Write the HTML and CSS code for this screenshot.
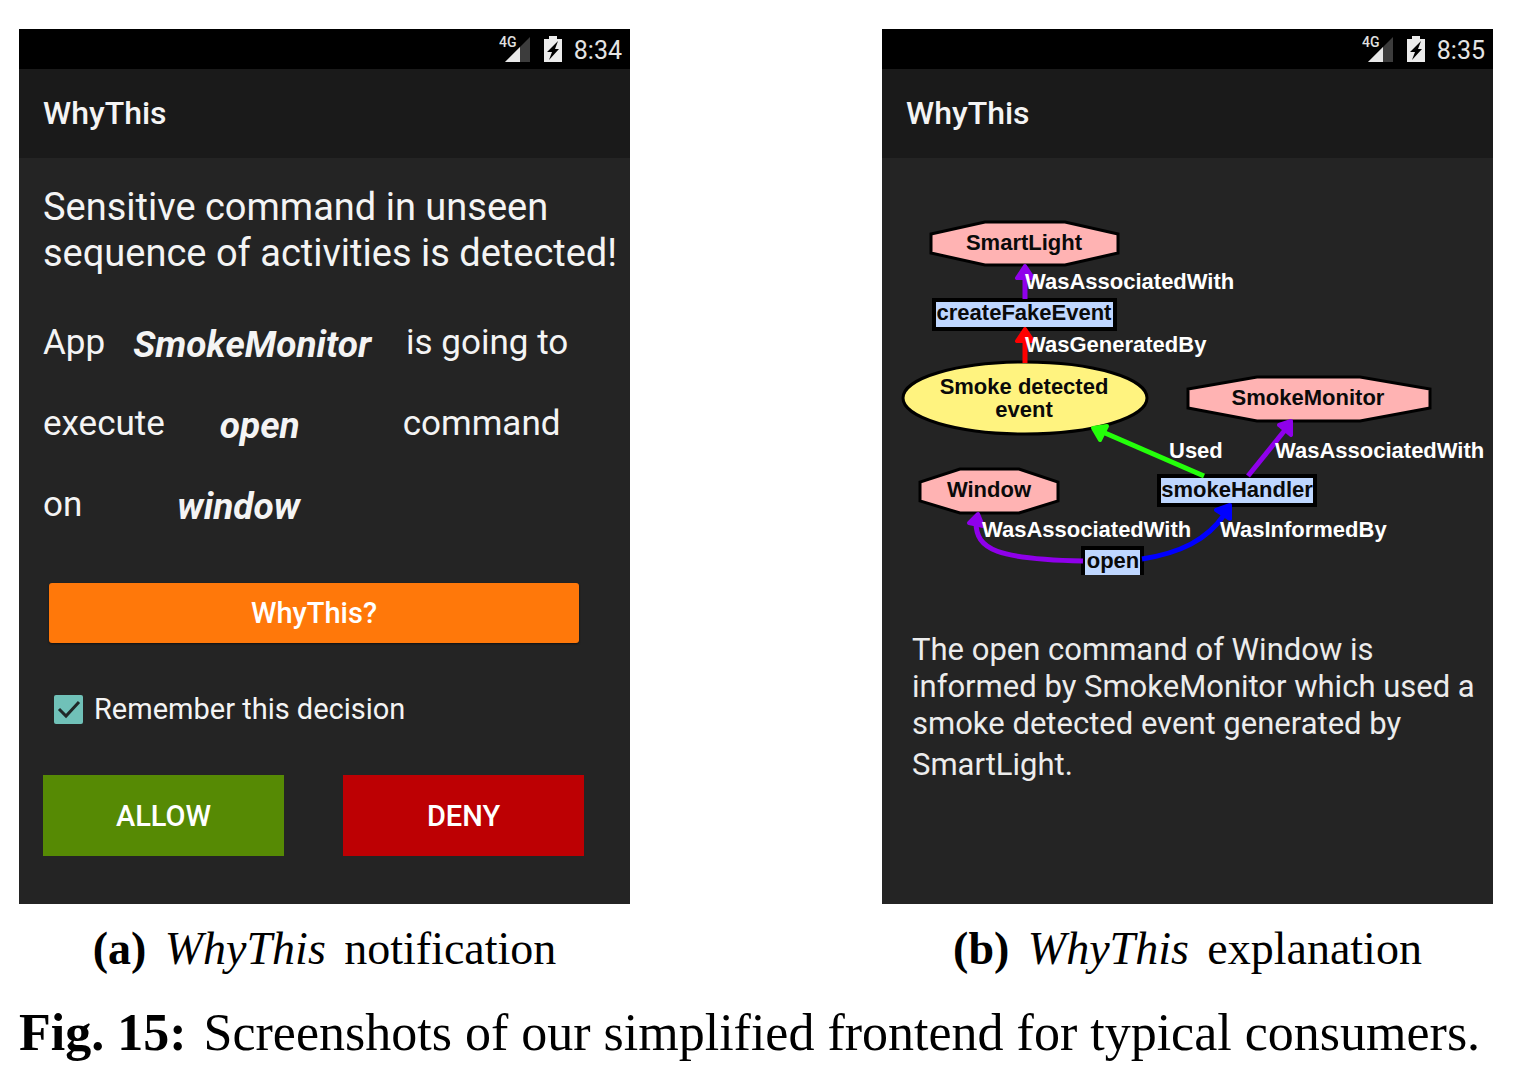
FILE: index.html
```html
<!DOCTYPE html>
<html lang="en">
<head>
<meta charset="utf-8">
<meta name="viewport" content="width=device-width, initial-scale=1">
<title>WhyThis frontend</title>
<link rel="stylesheet" href="styles.css">
</head>
<body>
<main class="figure">
  <div class="panels">
    <figure class="panel">
      <section class="phone">
        <div class="status">
          <svg class="signal" viewBox="0 0 32 28" aria-hidden="true">
            <text x="0" y="12" class="net">4G</text>
            <path d="M31 2V27H6Z" fill="#3c3c3c"/><path d="M21 12V27H6Z" fill="#e8e8e8"/>
          </svg>
          <svg class="battery" viewBox="0 0 18 26" aria-hidden="true">
            <path d="M5 0h8v3h5v23H0V3h5z" fill="#ececec"/><path d="M14 5L3 16h5l-3 8L15 13h-4z" fill="#000"/>
          </svg>
          <time>8:34</time>
        </div>
        <header class="appbar"><h1>WhyThis</h1></header>
        <form class="screen notice">
          <h2>Sensitive command in unseen<br>sequence of activities is detected!</h2>
          <p class="row row-app"><span>App</span><em>SmokeMonitor</em><span>is going to</span></p>
          <p class="row row-command"><span>execute</span><em>open</em><span>command</span></p>
          <p class="row row-device"><span>on</span><em>window</em></p>
          <button type="button" class="why">WhyThis?</button>
          <div class="remember">
            <input type="checkbox" id="remember" checked>
            <label for="remember">Remember this decision</label>
          </div>
          <div class="actions">
            <button type="button" class="allow">ALLOW</button>
            <button type="button" class="deny">DENY</button>
          </div>
        </form>
      </section>
      <figcaption><b>(a)</b> <i>WhyThis</i> notification</figcaption>
    </figure>
    <figure class="panel">
      <section class="phone">
        <div class="status">
          <svg class="signal" viewBox="0 0 32 28" aria-hidden="true">
            <text x="0" y="12" class="net">4G</text>
            <path d="M31 2V27H6Z" fill="#3c3c3c"/><path d="M21 12V27H6Z" fill="#e8e8e8"/>
          </svg>
          <svg class="battery" viewBox="0 0 18 26" aria-hidden="true">
            <path d="M5 0h8v3h5v23H0V3h5z" fill="#ececec"/><path d="M14 5L3 16h5l-3 8L15 13h-4z" fill="#000"/>
          </svg>
          <time>8:35</time>
        </div>
        <header class="appbar"><h1>WhyThis</h1></header>
        <div class="screen">
          <svg class="graph" viewBox="0 0 611 470" role="img" aria-label="Provenance graph">
            <g class="agent">
              <path d="M103 64H183L236 76V95L183 107H103L49 95V76Z"/>
              <path d="M375 219H478L548 231V250L478 263H375L306 250V231Z"/>
              <path d="M78 311H137L176 324V343L137 355H78L38 343V324Z"/>
            </g>
            <ellipse class="entity" cx="143" cy="240" rx="122" ry="36"/>
            <g class="activity">
              <rect x="52" y="142" width="181" height="29"/>
              <rect x="277" y="318" width="156" height="29"/>
              <path d="M201 417V390H260V417" />
            </g>
            <g class="edge associated">
              <path class="line" d="M143 141V118"/><path class="head" d="M143 108L135 120H151Z"/>
              <path class="line" d="M366 318L403 272"/><path class="head" d="M409 263L397 267L409 277Z"/>
              <path class="line" d="M201 403C115 401 94 392 94 364"/><path class="head" d="M96 356L87 365L101 368Z"/>
            </g>
            <g class="edge generated"><path class="line" d="M143 205V181"/><path class="head" d="M143 171L135 183H151Z"/></g>
            <g class="edge used"><path class="line" d="M322 318L223 275"/><path class="head" d="M211 270L225 268L218 282Z"/></g>
            <g class="edge informed"><path class="line" d="M260 401C298 395 325 382 342 357"/><path class="head" d="M348 347L334 352L348 361Z"/></g>
            <g class="node-text">
              <text x="142" y="92">SmartLight</text>
              <text x="142" y="162">createFakeEvent</text>
              <text x="142" y="236">Smoke detected</text>
              <text x="142" y="259">event</text>
              <text x="426" y="247">SmokeMonitor</text>
              <text x="107" y="339">Window</text>
              <text x="355" y="339">smokeHandler</text>
              <text x="231" y="410">open</text>
            </g>
            <g class="edge-text">
              <text x="143" y="131">WasAssociatedWith</text>
              <text x="143" y="194">WasGeneratedBy</text>
              <text x="287" y="300">Used</text>
              <text x="393" y="300">WasAssociatedWith</text>
              <text x="100" y="379">WasAssociatedWith</text>
              <text x="338" y="379">WasInformedBy</text>
            </g>
          </svg>
          <p class="explain">The open command of Window is<br>informed by SmokeMonitor which used a<br>smoke detected event generated by<span class="last">SmartLight.</span></p>
        </div>
      </section>
      <figcaption><b>(b)</b> <i>WhyThis</i> explanation</figcaption>
    </figure>
  </div>
  <p class="caption"><b>Fig. 15:</b> Screenshots of our simplified frontend for typical consumers.</p>
</main>
</body>
</html>
```
FILE: styles.css
```css
* { box-sizing: border-box; }
body { margin: 0; background: #fff; color: #000; font-family: "Liberation Serif", serif; }
h1, h2, p, figure { margin: 0; }
.figure { padding: 29px 23px 0 19px; }
.panels { display: grid; grid-template-columns: 1fr 1fr; column-gap: 252px; }
.phone { background: #242424; color: #f4f4f4; font-family: Roboto, sans-serif; }
.status { display: flex; align-items: center; justify-content: flex-end; height: 40px; padding-right: 8px; background: #000; }
.signal { width: 32px; height: 28px; margin-right: 13px; }
.net { font: 500 14px Roboto, sans-serif; fill: #e0e0e0; }
.battery { width: 18px; height: 26px; margin-right: 12px; }
.status time { padding-top: 3px; font-size: 25px; line-height: 37px; color: #e4e4e4; }
.appbar { padding: 0 24px; background: #1a1a1a; }
.appbar h1 { font-size: 32px; font-weight: 500; line-height: 89px; }
.screen { min-height: 746px; }
.notice { padding: 26px 0 0 24px; }
.notice h2 { font-size: 38px; font-weight: 400; line-height: 46px; white-space: nowrap; }
.row { display: flex; align-items: flex-start; height: 81px; line-height: 81px; font-size: 35px; white-space: nowrap; }
.row em { padding-top: 2px; font-weight: 700; font-size: 37px; }
.row-app { margin-top: 26px; }
.row-app em { margin: 0 35px 0 28px; }
.row-command em { margin: 0 103px 0 55px; }
.row-device em { margin-left: 95px; }
button { border: 0; padding: 0; color: #fff; font: 500 29px Roboto, sans-serif; }
.why { display: block; width: calc(100% - 57px); height: 60px; margin: 38px 0 0 6px; border-radius: 3px; background: #ff780a; box-shadow: 0 1px 2px #111; }
.remember { display: flex; align-items: center; gap: 11px; height: 40px; margin: 46px 0 0 11px; font-size: 29px; }
.remember input { appearance: none; width: 29px; height: 29px; margin: 0; border-radius: 2px; background: #70c1b8 url("data:image/svg+xml,%3Csvg xmlns='http://www.w3.org/2000/svg' viewBox='0 0 29 29'%3E%3Cpath d='M5 14l7 7L25 7' fill='none' stroke='%23202828' stroke-width='3'/%3E%3C/svg%3E"); }
.actions { display: grid; grid-template-columns: 1fr 1fr; gap: 59px; margin: 46px 46px 0 0; }
.actions button { height: 81px; }
.actions .allow { background: #568a04; }
.actions .deny { background: #bd0003; }
.graph { display: block; width: 100%; font: 700 22px "Liberation Sans", sans-serif; }
.agent { fill: #ffb3b3; stroke: #000; stroke-width: 3; }
.entity { fill: #fff37f; stroke: #000; stroke-width: 3; }
.activity { fill: #bfd7ff; stroke: #000; stroke-width: 4; }
.edge { stroke-width: 4; stroke-linejoin: round; }
.line { fill: none; stroke-width: 5; }
.associated { stroke: #8f00eb; fill: #8f00eb; }
.generated { stroke: #f00; fill: #f00; }
.used { stroke: #24ff0a; fill: #24ff0a; }
.informed { stroke: #00f; fill: #00f; }
.node-text { fill: #0a0a0a; text-anchor: middle; }
.edge-text { fill: #fff; }
.explain { padding: 3px 0 0 30px; font-size: 31px; line-height: 37px; white-space: nowrap; color: #ececec; }
.explain .last { display: block; margin-top: 4px; }
figcaption { padding-top: 20px; font-size: 46px; line-height: 50px; text-align: center; white-space: nowrap; }
figcaption i { margin: 0 7px; }
.caption { margin-top: 30px; font-size: 52px; line-height: 58px; white-space: nowrap; }
.caption b { margin-right: 4px; }
```
